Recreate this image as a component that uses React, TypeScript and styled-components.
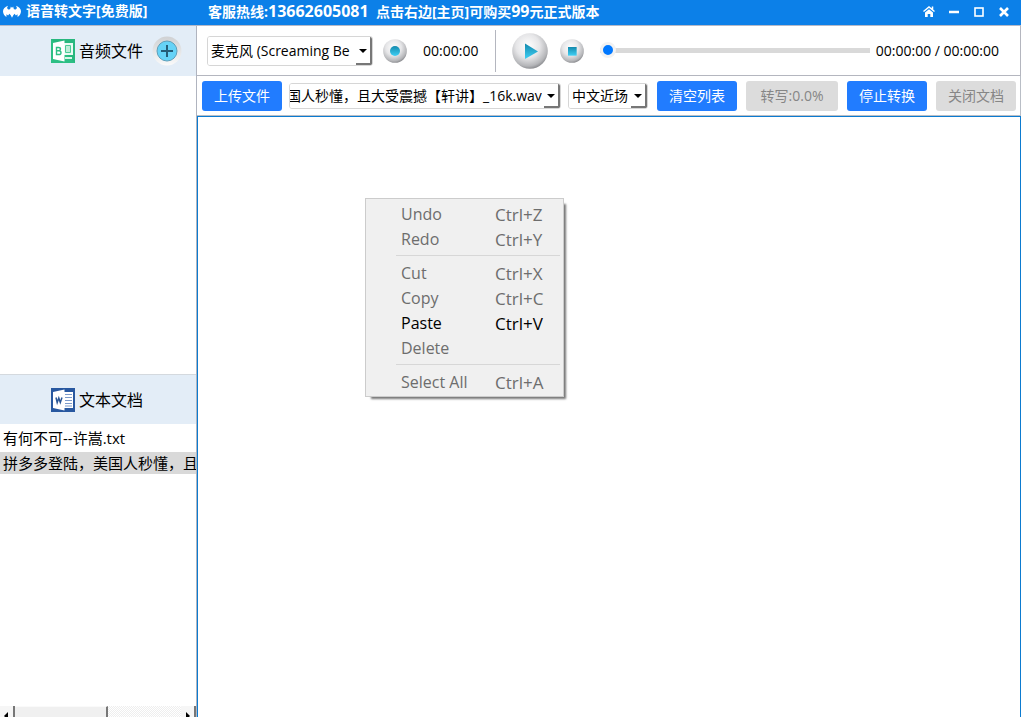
import React from "react";
import styled, { createGlobalStyle } from "styled-components";

const GlobalStyle = createGlobalStyle`
  * { box-sizing: border-box; }
  body { margin: 0; background: #fff; }
  body, button, select, input {
    font-family: "Open Sans", "Noto Sans CJK SC", sans-serif;
    font-size: 14px;
    color: #000;
  }
  button { border: 0; padding: 0; background: none; }
`;

const Page = styled.div`
  display: flex;
  flex-direction: column;
  height: 100vh;
  overflow: hidden;
`;

const TitleBar = styled.header`
  display: flex;
  align-items: center;
  flex: none;
  height: 26px;
  padding: 0 10px 3px 3px;
  background: #0c80e8;
  border-bottom: 1px solid #b4b9c8;
  color: #fff;
  font-weight: 700;
  line-height: 20px;
  white-space: pre;
`;

const AppName = styled.div`
  display: flex;
  align-items: center;
  gap: 5px;
  width: 205px;
`;

const Hotline = styled.div`
  flex: 1;
`;

const Digits = styled.span`
  font-size: 16px;
`;

const WindowButtons = styled.div`
  display: flex;
  gap: 11px;
`;

const WindowButton = styled.button`
  width: 14px;
  height: 14px;
  svg { display: block; }
`;

const Body = styled.div`
  display: flex;
  flex: 1;
  min-height: 0;
`;

const Sidebar = styled.aside`
  display: flex;
  flex-direction: column;
  flex: none;
  width: 197px;
  border-right: 1px solid #b0b4bf;
`;

const Section = styled.section<{ $grow: number }>`
  display: flex;
  flex-direction: column;
  flex: ${(p) => p.$grow} 1 0;
  min-height: 0;
`;

const SectionHead = styled.div<{ $line?: boolean }>`
  display: flex;
  align-items: center;
  flex: none;
  gap: 4px;
  height: 50px;
  padding-left: 51px;
  background: #e3edf7;
  border-top: ${(p) => (p.$line ? "1px solid #d4d9de" : "0")};
`;

const SectionTitle = styled.h2`
  margin: 0;
  font-size: 16px;
  font-weight: 400;
  line-height: 24px;
`;

const AddButton = styled.button`
  width: 30px;
  height: 30px;
  margin-left: 5px;
  svg { display: block; }
`;

const FileList = styled.ul`
  flex: 1;
  display: flex;
  flex-direction: column;
  gap: 3px;
  margin: 0;
  padding: 3px 0 0;
  overflow: hidden;
  list-style: none;
`;

const FileRow = styled.li<{ $selected?: boolean }>`
  flex: none;
  height: 22px;
  padding-left: 3px;
  overflow: hidden;
  background: ${(p) => (p.$selected ? "#d9d9d9" : "transparent")};
  font-size: 15px;
  line-height: 22px;
  white-space: nowrap;
`;

const ScrollBar = styled.div`
  display: flex;
  flex: none;
  height: 11px;
  overflow: hidden;
  background: repeating-conic-gradient(#eee 0 25%, #fff 0 50%) 0 0 / 2px 2px;
`;

const ScrollArrow = styled.button`
  width: 15px;
  height: 17px;
  background: #f6f6f6;
  border-right: 2px solid #777;
  svg { display: block; margin: 3px 0 0 3px; }
`;

const ScrollThumb = styled.div`
  width: 93px;
  height: 17px;
  margin-right: auto;
  background: #f0f0f0;
  border-top: 1px solid #fafafa;
  border-right: 2px solid #777;
`;

const Main = styled.main`
  display: flex;
  flex-direction: column;
  flex: 1;
  min-width: 0;
`;

const PlayerBar = styled.div`
  display: flex;
  align-items: center;
  flex: none;
  height: 50px;
  padding: 0 21px 0 10px;
  border: solid #b4b6bf;
  border-width: 0 1px 1px 0;
`;

const ActionBar = styled.div`
  display: flex;
  align-items: center;
  flex: none;
  gap: 9px;
  height: 40px;
  padding: 0 4px 0 5px;
  border: solid #b9bec6;
  border-width: 0 1px 1px 0;
`;

const SourceGroup = styled.div`
  display: flex;
  align-items: center;
  flex: 1;
  gap: 7px;
  min-width: 0;
`;

const ComboBox = styled.div<{ $width?: number; $height: number; $end?: boolean }>`
  position: relative;
  display: flex;
  justify-content: ${(p) => (p.$end ? "flex-end" : "flex-start")};
  flex: ${(p) => (p.$width ? `0 0 ${p.$width}px` : "1 1 0")};
  min-width: 0;
  height: ${(p) => p.$height}px;
  overflow: hidden;
  border: 1px solid #d6d6d6;
  border-radius: 3px;

  select {
    appearance: none;
    flex: 1 0 auto;
    height: 100%;
    padding: 0 18px 0 3px;
    border: 0;
    outline: 0;
    background: #fff;
  }
`;

const ComboArrow = styled.span`
  position: absolute;
  top: 0;
  right: 0;
  bottom: 0;
  display: flex;
  align-items: center;
  justify-content: center;
  width: 16px;
  padding-top: 2px;
  background: #fff;
  border-right: 2px solid #777;
  border-bottom: 2px solid #777;
  pointer-events: none;
`;

const RoundButton = styled.button<{ $left: number }>`
  flex: none;
  margin-left: ${(p) => p.$left}px;
  svg { display: block; }
`;

const Time = styled.span<{ $left: number }>`
  flex: none;
  margin-left: ${(p) => p.$left}px;
  line-height: 20px;
  white-space: nowrap;
`;

const Divider = styled.span`
  flex: none;
  width: 1px;
  height: 42px;
  margin: 0 16px 0 17px;
  background: #b4b6bf;
`;

const Seek = styled.input`
  appearance: none;
  flex: 1;
  min-width: 0;
  height: 16px;
  margin: 0 0 0 16px;
  background: none;

  &::-webkit-slider-runnable-track {
    height: 5px;
    background: #d9d9d9;
  }
  &::-webkit-slider-thumb {
    appearance: none;
    width: 16px;
    height: 16px;
    margin-top: -6px;
    border: 3px solid #f2f2f2;
    border-radius: 50%;
    background: #0078ff;
  }
`;

const ActionButton = styled.button<{ $wide?: boolean }>`
  flex: none;
  width: ${(p) => (p.$wide ? 92 : 80)}px;
  height: 30px;
  border-radius: 3px;
  background: #217cff;
  color: #fff;
  line-height: 20px;
  &:disabled { background: #dcdcdc; color: #868686; }
`;

const Editor = styled.div`
  position: relative;
  flex: 1;
  min-height: 0;
  border: solid #0c7bd0;
  border-width: 1px 1px 0;

  textarea {
    display: block;
    width: 100%;
    height: 100%;
    border: 0;
    outline: 0;
    resize: none;
    background: #fff;
  }
`;

const ContextMenu = styled.div`
  position: absolute;
  left: 167px;
  top: 81px;
  width: 199px;
  padding: 3px 3px 1px 0;
  background: #f0f0f0;
  border: 1px solid #ccc;
  box-shadow: 4px 4px 2px -2px #777;
`;

const MenuItem = styled.button`
  display: grid;
  grid-template-columns: 94px 1fr;
  width: 100%;
  height: 25px;
  padding-left: 35px;
  font-size: 16px;
  line-height: 25px;
  text-align: left;
  &:disabled { color: #6d6d6d; }
`;

const Shortcut = styled.span`
  font-size: 17px;
`;

const MenuLine = styled.hr`
  height: 1px;
  margin: 3px 0 5px 30px;
  border: 0;
  background: #d7d7d7;
`;

const Arrow = () => (
  <ComboArrow>
    <svg width="8" height="4" viewBox="0 0 8 4"><path d="M0 0h8L4 4z" fill="#000" /></svg>
  </ComboArrow>
);

const BatIcon = () => (
  <svg width="18" height="13" viewBox="0 0 18 13" fill="#fff">
    <path d="M5 .8C2 1.800 0 3.800 0 6.300c0 2.600 1.600 4.700 3.400 5.700L3.500 9.200l1.600 1.200 1.300-1.600 1.300 1.400L9 12.700l1.300-2.500 1.300-1.400 1.300 1.600 1.600-1.200.1 2.800c1.800-1 3.400-3.100 3.400-5.700 0-2.500-2-4.500-5-5.500l1 2.300-1.200 1.500-1.900-.4L10.100 1.500 9.500 2.600h-1L7.900 1.500l-.8 2.700-1.900.4L4 3.100z" />
  </svg>
);

const AudioIcon = () => (
  <svg width="24" height="24" viewBox="0 0 24 24">
    <rect width="24" height="24" fill="#2dbf84" />
    <path d="M0 0h24v24z" fill="#1fa873" opacity=".35" />
    <rect x="13" y="4" width="9" height="12" fill="#e9faf2" />
    <path d="M14.500 6.500h5v7h-5z" fill="#bdeed8" stroke="#4cca97" />
    <path d="M14 19h7" stroke="#d9f5e9" strokeWidth="2" />
    <path d="M2 4l11.500-2.500v21L2 20z" fill="#fff" />
    <path d="M5.500 8.500h2q2 0 2 1.600t-2 1.700h-2zM5.500 11.800h2.300q2.200 0 2.200 1.900t-2.200 1.800H5.500z" fill="none" stroke="#2dbf84" strokeWidth="1.400" />
  </svg>
);

const WordIcon = () => (
  <svg width="24" height="24" viewBox="0 0 24 24">
    <rect width="24" height="24" fill="#2858a0" />
    <rect x="13" y="4" width="9" height="16" fill="#fff" />
    <path d="M14 6.500h7M14 9.500h7M14 12.500h7M14 15.500h7M14 18h7" stroke="#7b9aca" />
    <path d="M2 4l11.500-2.500v21L2 20z" fill="#fff" />
    <path d="M5 9.500l1.200 5 1.600-4.500 1.500 4.500L11 9.500" fill="none" stroke="#2b5797" strokeWidth="1.500" />
  </svg>
);

const Knob = ({ size, children }: { size: number; children: React.ReactNode }) => (
  <svg width={size} height={size} viewBox="0 0 36 36">
    <defs>
      <radialGradient id={`metal${size}`} cx=".44" cy=".36" r=".66">
        <stop offset="0" stopColor="#fff" />
        <stop offset=".5" stopColor="#e6e6e8" />
        <stop offset=".85" stopColor="#b4b5b8" />
        <stop offset="1" stopColor="#85868a" />
      </radialGradient>
      <linearGradient id={`cyan${size}`} x1="0" y1="0" x2="0" y2="1">
        <stop offset="0" stopColor="#1489ad" />
        <stop offset="1" stopColor="#3fd0f5" />
      </linearGradient>
    </defs>
    <circle cx="18" cy="18" r="17.800" fill={`url(#metal${size})`} />
    <g fill={`url(#cyan${size})`}>{children}</g>
  </svg>
);

type Entry = { label: string; keys?: string; enabled?: boolean };
const menuGroups: Entry[][] = [
  [{ label: "Undo", keys: "Ctrl+Z" }, { label: "Redo", keys: "Ctrl+Y" }],
  [
    { label: "Cut", keys: "Ctrl+X" },
    { label: "Copy", keys: "Ctrl+C" },
    { label: "Paste", keys: "Ctrl+V", enabled: true },
    { label: "Delete" },
  ],
  [{ label: "Select All", keys: "Ctrl+A" }],
];

export default function App() {
  return (
    <Page>
      <GlobalStyle />
      <TitleBar>
        <AppName><BatIcon />语音转文字[免费版]</AppName>
        <Hotline>客服热线:<Digits>13662605081</Digits>{"  "}点击右边[主页]可购买<Digits>99</Digits>元正式版本</Hotline>
        <WindowButtons>
          <WindowButton aria-label="主页">
            <svg width="14" height="14" viewBox="0 0 14 14">
              <path d="M1.500 7.500L7 3l5.500 4.500M10.500 2.500v3" fill="none" stroke="#fff" strokeWidth="1.500" />
              <path d="M3 8.500L7 5.200l4 3.300V13H8.300v-3H5.700v3H3z" fill="#fff" />
            </svg>
          </WindowButton>
          <WindowButton aria-label="最小化">
            <svg width="14" height="14" viewBox="0 0 14 14"><path d="M2 8h10" stroke="#fff" strokeWidth="2.500" /></svg>
          </WindowButton>
          <WindowButton aria-label="最大化">
            <svg width="14" height="14" viewBox="0 0 14 14"><rect x="3" y="4" width="8" height="8" fill="none" stroke="#fff" strokeWidth="1.600" /></svg>
          </WindowButton>
          <WindowButton aria-label="关闭">
            <svg width="14" height="14" viewBox="0 0 14 14"><path d="M3 4l8 8M11 4l-8 8" stroke="#fff" strokeWidth="2.600" /></svg>
          </WindowButton>
        </WindowButtons>
      </TitleBar>
      <Body>
        <Sidebar>
          <Section $grow={348}>
            <SectionHead>
              <AudioIcon />
              <SectionTitle>音频文件</SectionTitle>
              <AddButton aria-label="添加音频文件">
                <svg width="30" height="30" viewBox="0 0 30 30">
                  <defs>
                    <linearGradient id="ring" x1="0" y1="0" x2="0" y2="1">
                      <stop offset="0" stopColor="#cfd1d3" />
                      <stop offset="1" stopColor="#fafafa" />
                    </linearGradient>
                  </defs>
                  <circle cx="15" cy="15" r="14.500" fill="url(#ring)" />
                  <circle cx="15" cy="15" r="10" fill="#66d3f7" stroke="#5e9fba" />
                  <path d="M9 15h12M15 9v12" stroke="#245d78" strokeWidth="2" />
                </svg>
              </AddButton>
            </SectionHead>
            <FileList />
          </Section>
          <Section $grow={343}>
            <SectionHead $line>
              <WordIcon />
              <SectionTitle>文本文档</SectionTitle>
            </SectionHead>
            <FileList>
              <FileRow>有何不可--许嵩.txt</FileRow>
              <FileRow $selected>拼多多登陆，美国人秒懂，且</FileRow>
            </FileList>
            <ScrollBar>
              <ScrollArrow aria-label="向左滚动">
                <svg width="6" height="8" viewBox="0 0 6 8"><path d="M5 0v8L1 4z" /></svg>
              </ScrollArrow>
              <ScrollThumb />
              <ScrollArrow aria-label="向右滚动">
                <svg width="8" height="8" viewBox="0 0 8 8"><path d="M2 0v8l4-4z" /></svg>
              </ScrollArrow>
            </ScrollBar>
          </Section>
        </Sidebar>
        <Main>
          <PlayerBar>
            <ComboBox $width={166} $height={30}>
              <select aria-label="录音设备"><option>麦克风 (Screaming Be</option></select>
              <Arrow />
            </ComboBox>
            <RoundButton $left={10} aria-label="录音">
              <Knob size={24}><circle cx="18" cy="18" r="7.500" /></Knob>
            </RoundButton>
            <Time $left={16}>00:00:00</Time>
            <Divider />
            <RoundButton $left={0} aria-label="播放">
              <Knob size={36}><path d="M13 10.500v15.500L26 18.500z" /></Knob>
            </RoundButton>
            <RoundButton $left={12} aria-label="停止">
              <Knob size={24}><path d="M12 12h13v13H12z" /></Knob>
            </RoundButton>
            <Seek type="range" min={0} max={100} defaultValue={0} aria-label="播放进度" />
            <Time $left={6}>00:00:00 / 00:00:00</Time>
          </PlayerBar>
          <ActionBar>
            <SourceGroup>
              <ActionButton>上传文件</ActionButton>
              <ComboBox $height={26} $end>
                <select aria-label="音频文件"><option>拼多多登陆，美国人秒懂，且大受震撼【轩讲】_16k.wav</option></select>
                <Arrow />
              </ComboBox>
              <ComboBox $width={80} $height={26}>
                <select aria-label="识别模型"><option>中文近场</option></select>
                <Arrow />
              </ComboBox>
            </SourceGroup>
            <ActionButton>清空列表</ActionButton>
            <ActionButton $wide disabled>转写:0.0%</ActionButton>
            <ActionButton>停止转换</ActionButton>
            <ActionButton disabled>关闭文档</ActionButton>
          </ActionBar>
          <Editor>
            <textarea aria-label="文档内容" />
            <ContextMenu role="menu">
              {menuGroups.map((group, i) => (
                <React.Fragment key={i}>
                  {i > 0 && <MenuLine />}
                  {group.map((entry) => (
                    <MenuItem key={entry.label} role="menuitem" disabled={!entry.enabled}>
                      <span>{entry.label}</span>
                      <Shortcut>{entry.keys}</Shortcut>
                    </MenuItem>
                  ))}
                </React.Fragment>
              ))}
            </ContextMenu>
          </Editor>
        </Main>
      </Body>
    </Page>
  );
}
